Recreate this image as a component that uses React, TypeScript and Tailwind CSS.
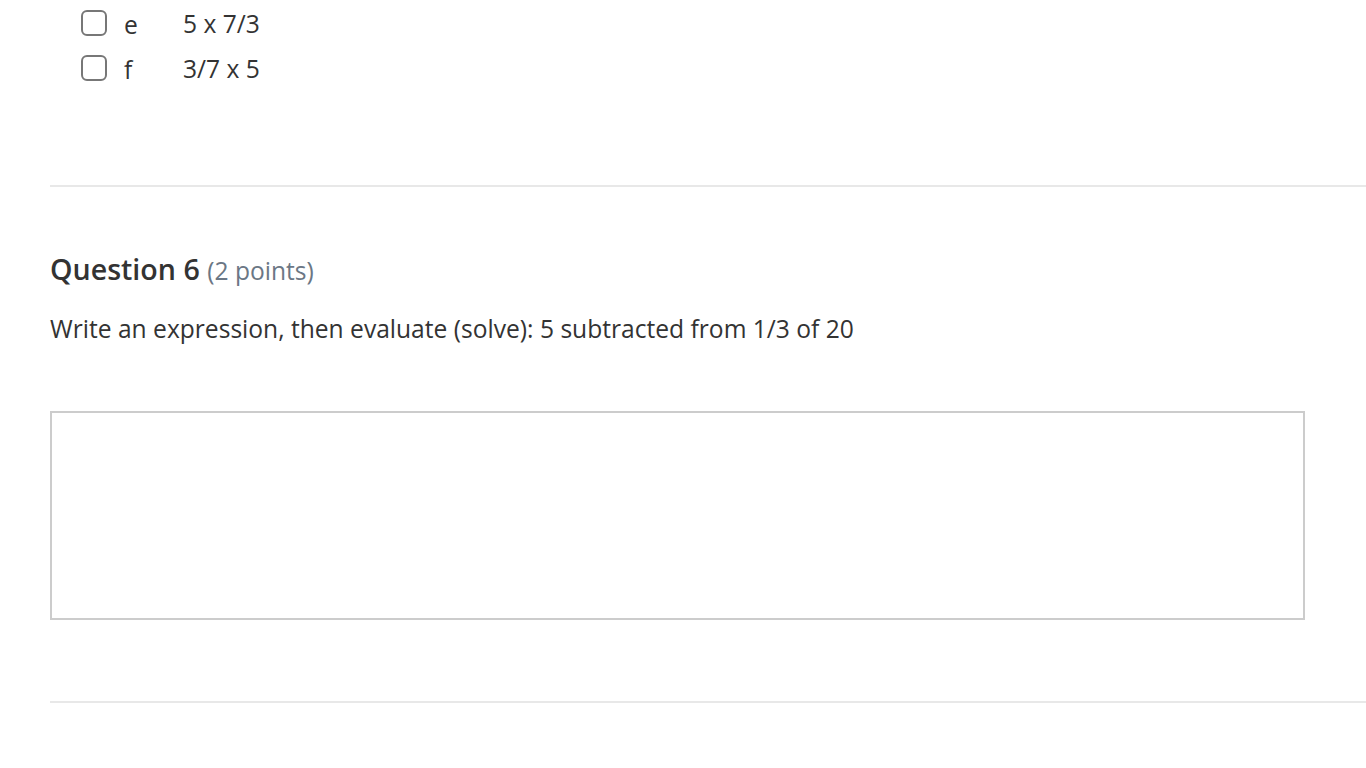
import React from "react";

function Row({ letter, text }: { letter: string; text: string }) {
  return (
    <div className="flex items-center h-[45px]">
      <div className="w-[26px] h-[26px] border-2 border-[#777] rounded-[6px] bg-white" />
      <span className="ml-[17px] w-[59px] text-[24.6px] text-[#333] leading-none pt-[6px]">{letter}</span>
      <span className="text-[24.6px] text-[#333] leading-none pt-[4px]">{text}</span>
    </div>
  );
}

export default function App() {
  return (
    <div className="w-[1366px] h-[768px] bg-white overflow-hidden" style={{ fontFamily: '"Open Sans", sans-serif' }}>
      <div className="pl-[50px]">
        <div className="pl-[31px]">
          <Row letter="e" text="5 x 7/3" />
          <Row letter="f" text="3/7 x 5" />
        </div>
        <div className="mt-[95px] h-[2px] bg-[#e8e8e8]" />
        <div className="pt-[68px]">
          <h2 className="text-[28.6px] font-semibold text-[#333] leading-none">
            Question 6 <span className="text-[24.6px] font-normal text-[#6b7785]">(2 points)</span>
          </h2>
          <p className="mt-[33px] text-[24.6px] text-[#333] leading-none">
            Write an expression, then evaluate (solve): 5 subtracted from 1/3 of 20
          </p>
          <div className="mt-[70px] w-[1255px] h-[209px] border-2 border-[#ccc]" />
        </div>
        <div className="mt-[81px] h-[2px] bg-[#e8e8e8]" />
      </div>
    </div>
  );
}
